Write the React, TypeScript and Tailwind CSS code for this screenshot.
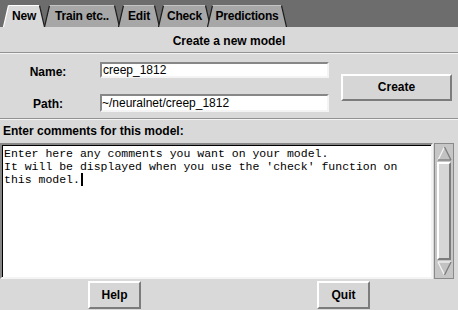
import React from 'react';

type TabDef = { label: string; width: number; cls: string; active?: boolean };

const tabs: TabDef[] = [
  { label: 'New', width: 42, cls: 'w-[42px] z-10', active: true },
  { label: 'Train etc..', width: 76, cls: 'w-[76px] -ml-[1px]' },
  { label: 'Edit', width: 42, cls: 'w-[42px] -ml-[2px]' },
  { label: 'Check', width: 53, cls: 'w-[53px] -ml-[2px]' },
  { label: 'Predictions', width: 80, cls: 'w-[80px] -ml-[4px]' },
];

const Tab: React.FC<TabDef> = ({ label, width, cls, active }) => {
  const w = width;
  return (
    <div className={`relative h-[22px] flex items-center justify-center ${cls}`}>
      <svg className="absolute inset-0" width={w} height={22}>
        <polygon
          points={`0.5,22.5 5.5,0.5 ${w - 5.5},0.5 ${w - 0.5},22.5`}
          fill={active ? '#d9d9d9' : '#a7a7a7'}
        />
        <line x1={0.5} y1={22} x2={5.5} y2={0.5} stroke={active ? '#ffffff' : '#1e1e1e'} strokeWidth={1.2} />
        <line x1={5.5} y1={0.5} x2={w - 5.5} y2={0.5} stroke={active ? '#ffffff' : '#c4c4c4'} strokeWidth={1} />
        <line x1={w - 5.5} y1={0.5} x2={w - 0.5} y2={22} stroke="#1e1e1e" strokeWidth={1.2} />
      </svg>
      <span className="relative text-[12px] font-bold leading-[22px] text-black tracking-[-0.2px]">{label}</span>
    </div>
  );
};

const raised = 'border-2 border-t-white border-l-white border-r-[#7c7c7c] border-b-[#7c7c7c] bg-[#d6d6d6]';
const sunken = 'border-2 border-t-[#878787] border-l-[#878787] border-r-[#f4f4f4] border-b-[#f4f4f4]';

const Separator = () => <div className="h-[2px] border-t border-t-[#929292] border-b border-b-[#f4f4f4]" />;

const Arrow: React.FC<{ up?: boolean }> = ({ up }) => (
  <svg width="15" height="15" viewBox="0 0 15 15" className="block">
    {up ? (
      <>
        <polygon points="7.5,1 14,14 1,14" fill="#c2c2c2" />
        <line x1="7.5" y1="1" x2="1" y2="14" stroke="#f4f4f4" strokeWidth="1.3" />
        <line x1="7.5" y1="1" x2="14" y2="14" stroke="#7a7a7a" strokeWidth="1.3" />
        <line x1="1" y1="14" x2="14" y2="14" stroke="#7a7a7a" strokeWidth="1.3" />
      </>
    ) : (
      <>
        <polygon points="1,1 14,1 7.5,14" fill="#c2c2c2" />
        <line x1="1" y1="1" x2="14" y2="1" stroke="#f4f4f4" strokeWidth="1.3" />
        <line x1="1" y1="1" x2="7.5" y2="14" stroke="#f4f4f4" strokeWidth="1.3" />
        <line x1="14" y1="1" x2="7.5" y2="14" stroke="#7a7a7a" strokeWidth="1.3" />
      </>
    )}
  </svg>
);

export default function App() {
  return (
    <div className="w-[458px] h-[310px] overflow-hidden bg-[#d9d9d9] flex flex-col font-['Liberation_Sans',Arial,sans-serif] text-black">
      {/* tab bar */}
      <div className="h-[27px] bg-[#6d6d6d] flex items-end pl-[3px] shrink-0">
        {tabs.map((t) => (
          <Tab key={t.label} {...t} />
        ))}
      </div>

      {/* title */}
      <div className="h-[25px] pt-[7px] text-center text-[12px] font-bold leading-[15px] shrink-0">Create a new model</div>
      <Separator />

      {/* form */}
      <div className="h-[64px] flex items-center shrink-0">
        <div className="flex flex-col gap-[16px] pt-[2px]">
          <div className="flex items-center h-[16px]">
            <span className="w-[96px] text-center text-[12px] font-bold pt-[3px]">Name:</span>
            <div className={`ml-[4px] w-[229px] h-[16px] bg-white flex items-center pl-[1px] text-[12px] ${sunken}`}>creep_1812</div>
          </div>
          <div className="flex items-center h-[18px]">
            <span className="w-[96px] text-center text-[12px] font-bold pt-[2px]">Path:</span>
            <div className={`ml-[4px] w-[229px] h-[18px] bg-white flex items-center text-[12px] ${sunken}`}>~/neuralnet/creep_1812</div>
          </div>
        </div>
        <button className={`ml-[12px] mt-[2px] w-[111px] h-[27px] text-[12px] font-bold ${raised}`}>Create</button>
      </div>
      <Separator />

      {/* comments label */}
      <div className="h-[23px] pt-[4px] pl-[3px] text-[12px] font-bold leading-[15px] shrink-0">Enter comments for this model:</div>

      {/* text area + scrollbar */}
      <div className="h-[136px] flex shrink-0">
        <div className={`w-[433px] ${sunken} border-r-[#1a1a1a] border-b-[#1a1a1a]`}>
          <div className="h-full bg-white border-t border-l border-t-black border-l-black pl-[1px] pt-[1px] font-['Liberation_Mono','Courier_New',monospace] text-[11.5px] leading-[13px] whitespace-pre">
            {'Enter here any comments you want on your model.\nIt will be displayed when you use the \'check\' function on\nthis model.'}
            <span className="inline-block w-[2px] h-[13px] bg-black align-top ml-[1px]" />
          </div>
        </div>
        <div className="ml-[1px] w-[20px] flex flex-col border border-[#8a8a8a] bg-[#c6c6c6] p-[1px]">
          <div className="flex justify-center pt-[1px]">
            <Arrow up />
          </div>
          <div className={`flex-1 my-[1px] mx-[1px] ${raised} bg-[#cfcfcf]`} />
          <div className="flex justify-center pb-[1px]">
            <Arrow />
          </div>
        </div>
      </div>

      {/* bottom buttons */}
      <div className="flex-1 grid grid-cols-2 items-center justify-items-center">
        <button className={`w-[53px] h-[28px] text-[12px] font-bold ${raised}`}>Help</button>
        <button className={`w-[53px] h-[28px] text-[12px] font-bold ${raised}`}>Quit</button>
      </div>
    </div>
  );
}
